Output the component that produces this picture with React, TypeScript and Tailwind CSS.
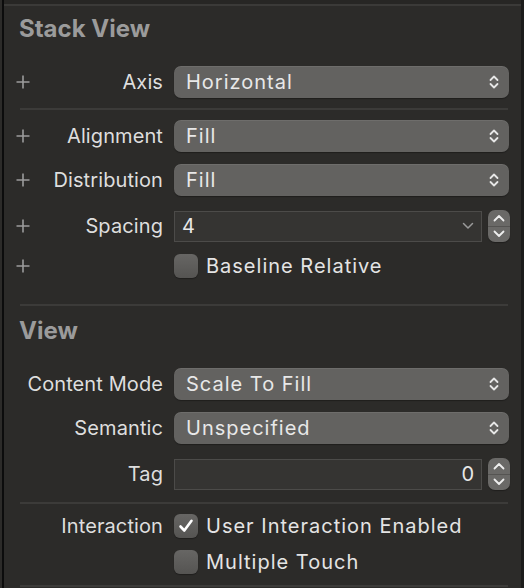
import React from "react";

const font = { fontFamily: "Inter, 'Noto Sans', sans-serif" };

function Plus() {
  return (
    <svg width="14" height="14" viewBox="0 0 14 14" className="shrink-0 text-[#9c9c9c]">
      <path d="M7 0.5v13M0.5 7h13" stroke="currentColor" strokeWidth="1.6" fill="none" />
    </svg>
  );
}

function UpDown() {
  return (
    <svg width="10" height="16" viewBox="0 0 10 16" className="text-[#e6e6e6]">
      <path d="M1.5 6L5 2.5 8.5 6M1.5 10L5 13.5 8.5 10" stroke="currentColor" strokeWidth="1.8" fill="none" strokeLinecap="round" strokeLinejoin="round" />
    </svg>
  );
}

function Popup({ value }: { value: string }) {
  return (
    <div className="flex h-[32px] w-[335px] items-center justify-between rounded-[7px] bg-[#636260] pl-[12px] pr-[10px] shadow-[inset_0_1px_0_rgba(255,255,255,0.07),0_1px_1px_rgba(0,0,0,0.3)]">
      <span className="text-[20px] leading-none tracking-[1px] text-[#e8e8e8]">{value}</span>
      <UpDown />
    </div>
  );
}

function Stepper() {
  return (
    <div className="flex h-[32px] w-[22px] shrink-0 flex-col items-center rounded-[7px] bg-[#6a6967] shadow-[0_1px_1px_rgba(0,0,0,0.3)]">
      <div className="flex w-full flex-1 items-center justify-center border-b border-[#555452]">
        <svg width="12" height="8" viewBox="0 0 12 8">
          <path d="M1.5 6.5L6 2 10.5 6.5" stroke="#eeeeee" strokeWidth="1.8" fill="none" strokeLinecap="round" strokeLinejoin="round" />
        </svg>
      </div>
      <div className="flex w-full flex-1 items-center justify-center">
        <svg width="12" height="8" viewBox="0 0 12 8">
          <path d="M1.5 1.5L6 6 10.5 1.5" stroke="#eeeeee" strokeWidth="1.8" fill="none" strokeLinecap="round" strokeLinejoin="round" />
        </svg>
      </div>
    </div>
  );
}

function NumberField({ value, combo }: { value: string; combo?: boolean }) {
  return (
    <div className="flex w-[336px] items-center gap-[6px]">
      <div className="flex h-[31px] flex-1 items-center border border-[#4c4b49] bg-[#353432] px-[7px]">
        {combo ? (
          <>
            <span className="flex-1 text-[20px] leading-none text-[#e8e8e8]">{value}</span>
            <svg width="12" height="8" viewBox="0 0 12 8">
              <path d="M1.5 1.5L6 6 10.5 1.5" stroke="#9a9a9a" strokeWidth="1.5" fill="none" strokeLinecap="round" strokeLinejoin="round" />
            </svg>
          </>
        ) : (
          <span className="flex-1 text-right text-[20px] leading-none text-[#e8e8e8]">{value}</span>
        )}
      </div>
      <Stepper />
    </div>
  );
}

function Checkbox({ checked, label }: { checked?: boolean; label: string }) {
  return (
    <div className="flex items-center gap-[8px]">
      <div className="flex h-[24px] w-[24px] items-center justify-center rounded-[6px] bg-gradient-to-b from-[#676664] to-[#555452] shadow-[0_1px_1px_rgba(0,0,0,0.3)]">
        {checked && (
          <svg width="16" height="16" viewBox="0 0 16 16">
            <path d="M2.5 8.5L6.3 12.5 13.5 2.8" stroke="#ffffff" strokeWidth="2.6" fill="none" strokeLinecap="round" strokeLinejoin="round" />
          </svg>
        )}
      </div>
      <span className="whitespace-nowrap text-[20px] leading-none tracking-[1px] text-[#e4e4e4]">{label}</span>
    </div>
  );
}

function Row({
  label,
  plus,
  children,
  className = "",
}: {
  label?: string;
  plus?: boolean;
  children: React.ReactNode;
  className?: string;
}) {
  return (
    <div className={`flex items-center pl-[12px] ${className}`}>
      <div className="flex w-[147px] shrink-0 items-center">
        {/* the plus sits at the left edge, the label fills the cell right-aligned */}
        <div className="w-0">{plus && <Plus />}</div>
        <span className="flex-1 whitespace-nowrap text-right text-[20px] leading-none tracking-[0.1px] text-[#dedede]">
          {label}
        </span>
      </div>
      <div className="ml-[11px]">{children}</div>
    </div>
  );
}

function Separator({ className = "" }: { className?: string }) {
  return <div className={`ml-[16px] mr-[13px] h-[2px] bg-[#3c3b39] ${className}`} />;
}

export default function App() {
  return (
    <div className="flex h-[588px] w-[524px] overflow-hidden bg-[#2c2b29]" style={font}>
      <div className="w-[2px]" />
      <div className="w-[2px] bg-[#0c0c0c]" />
      <div className="flex flex-1 flex-col">
        <div className="h-[4px] bg-[#272624]" />
        <div className="h-[2px] bg-[#3b3a38]" />

        <h2 className="ml-[15px] mt-[11px] text-[24px] font-bold leading-[24px] text-[#9b9b9b]">Stack View</h2>

        <Row label="Axis" plus className="mt-[25px] h-[32px]">
          <Popup value="Horizontal" />
        </Row>
        <Separator className="mt-[10px]" />
        <Row label="Alignment" plus className="mt-[10px] h-[32px]">
          <Popup value="Fill" />
        </Row>
        <Row label="Distribution" plus className="mt-[12px] h-[32px]">
          <Popup value="Fill" />
        </Row>
        <Row label="Spacing" plus className="mt-[14px] h-[32px]">
          <NumberField value="4" combo />
        </Row>
        <Row plus className="mt-[12px] h-[24px]">
          <Checkbox label="Baseline Relative" />
        </Row>
        <Separator className="mt-[26px]" />

        <h2 className="ml-[15px] mt-[13px] text-[24px] font-bold leading-[24px] text-[#9b9b9b]">View</h2>

        <Row label="Content Mode" className="mt-[25px] h-[32px]">
          <Popup value="Scale To Fill" />
        </Row>
        <Row label="Semantic" className="mt-[12px] h-[32px]">
          <Popup value="Unspecified" />
        </Row>
        <Row label="Tag" className="mt-[14px] h-[32px]">
          <NumberField value="0" />
        </Row>
        <Separator className="mt-[12px]" />
        <Row label="Interaction" className="mt-[10px] h-[24px]">
          <Checkbox checked label="User Interaction Enabled" />
        </Row>
        <Row className="mt-[12px] h-[24px]">
          <Checkbox label="Multiple Touch" />
        </Row>
        <Separator className="mt-[11px]" />
      </div>
      <div className="w-[3px] bg-[#1c1c1b]" />
    </div>
  );
}
